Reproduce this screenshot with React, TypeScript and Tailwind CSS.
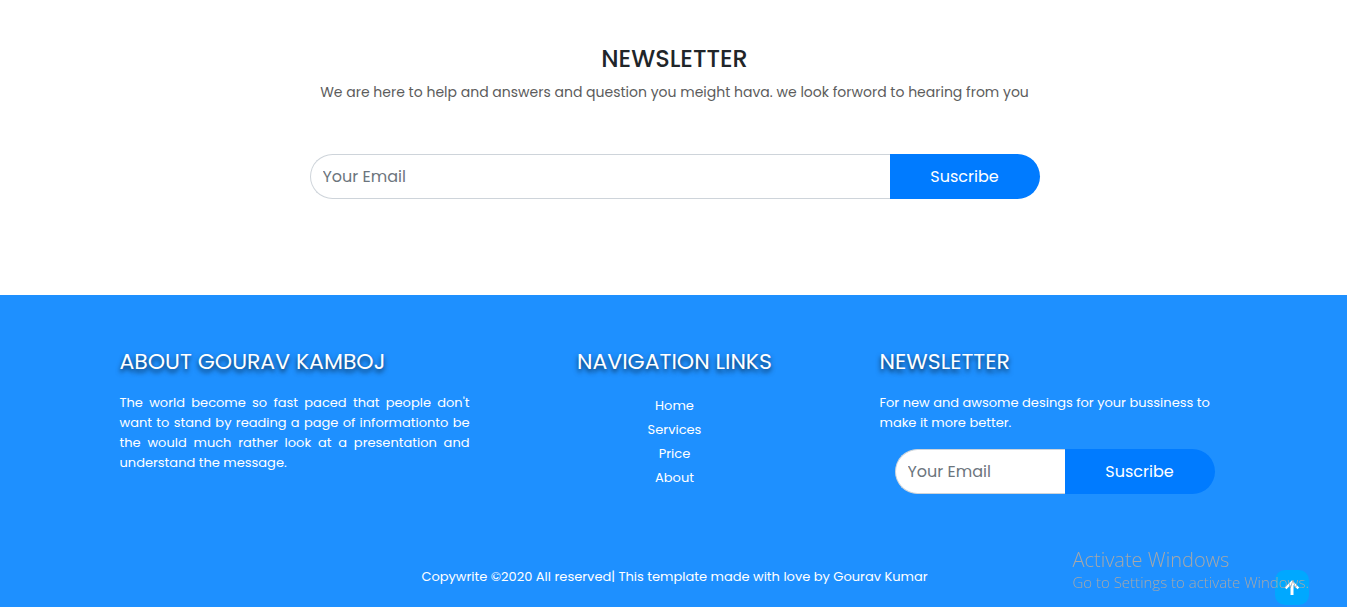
const links = ["Home", "Services", "Price", "About"];

function SubscribeForm() {
  return (
    <form className="flex w-full" onSubmit={(e) => e.preventDefault()}>
      <input
        type="email"
        aria-label="Your Email"
        placeholder="Your Email"
        className="h-[45px] min-w-0 flex-1 rounded-l-full border border-r-0 border-[#ced4da] bg-white px-3 text-base text-[#495057] outline-none placeholder:text-[#6c757d]"
      />
      <button
        type="submit"
        className="h-[45px] w-[150px] shrink-0 rounded-r-full bg-[#007bff] text-base text-white"
      >
        Suscribe
      </button>
    </form>
  );
}

function FooterHeading({ children }: { children: string }) {
  return (
    <h2 className="text-[22px] leading-[26px] uppercase whitespace-nowrap [text-shadow:0_3px_5px_rgba(0,0,0,0.7)]">
      {children}
    </h2>
  );
}

export default function App() {
  return (
    <div className="bg-white font-['Poppins','Inter',sans-serif] text-[#212529]">
      <section className="flex flex-col items-center pt-[45px] pr-4 pb-24 pl-[18px] text-center">
        <h1 className="text-2xl leading-7 font-medium uppercase">Newsletter</h1>
        <p className="mt-2 text-[14px] leading-[22px] text-[#5c5c5c]">
          We are here to help and answers and question you meight hava. we look forword to hearing
          from you
        </p>
        <div className="mt-[51px] w-full max-w-[730px]">
          <SubscribeForm />
        </div>
      </section>

      <footer className="bg-[#1e90ff] pt-[54px] pb-5 pl-[2px] text-[13px] leading-5 text-white">
        <div className="mx-auto grid max-w-[1140px] grid-cols-1 gap-y-8 md:grid-cols-3">
          <div className="px-[15px]">
            <FooterHeading>About Gourav Kamboj</FooterHeading>
            <p className="mt-[18px] text-justify">
              The world become so fast paced that people don't want to stand by reading a page of
              informationto be the would much rather look at a presentation and understand the
              message.
            </p>
          </div>
          <nav className="flex flex-col items-center px-[15px]" aria-label="Footer">
            <FooterHeading>Navigation Links</FooterHeading>
            <ul className="mt-[19px] text-center leading-6">
              {links.map((name) => (
                <li key={name}>
                  <a href="#">{name}</a>
                </li>
              ))}
            </ul>
          </nav>
          <div className="px-[15px]">
            <FooterHeading>Newsletter</FooterHeading>
            <p className="mt-[18px]">
              For new and awsome desings for your bussiness to make it more better.
            </p>
            <div className="mt-4 px-[15px]">
              <SubscribeForm />
            </div>
          </div>
        </div>
        <p className="mt-[73px] text-center">
          Copywrite ©2020 All reserved| This template made with love by Gourav Kumar
        </p>
      </footer>

      <a
        href="#"
        aria-label="Back to top"
        className="fixed right-[38px] bottom-[2px] flex h-[35px] w-[34px] items-center justify-center rounded-[10px] bg-[#00a8ff] text-white"
      >
        <svg width="16" height="16" viewBox="0 0 16 16" fill="none" stroke="currentColor" aria-hidden="true">
          <path d="M8 15V3" strokeWidth="3" />
          <path d="M1.6 8.400L8 2l6.400 6.400" strokeWidth="2.400" />
        </svg>
      </a>

      <div className="pointer-events-none fixed right-[38px] bottom-[15px] font-['Open_Sans',sans-serif] font-light whitespace-nowrap text-[#a8a8a8]">
        <p className="text-[20px] leading-6">Activate Windows</p>
        <p className="text-[15px] leading-5">Go to Settings to activate Windows.</p>
      </div>
    </div>
  );
}
